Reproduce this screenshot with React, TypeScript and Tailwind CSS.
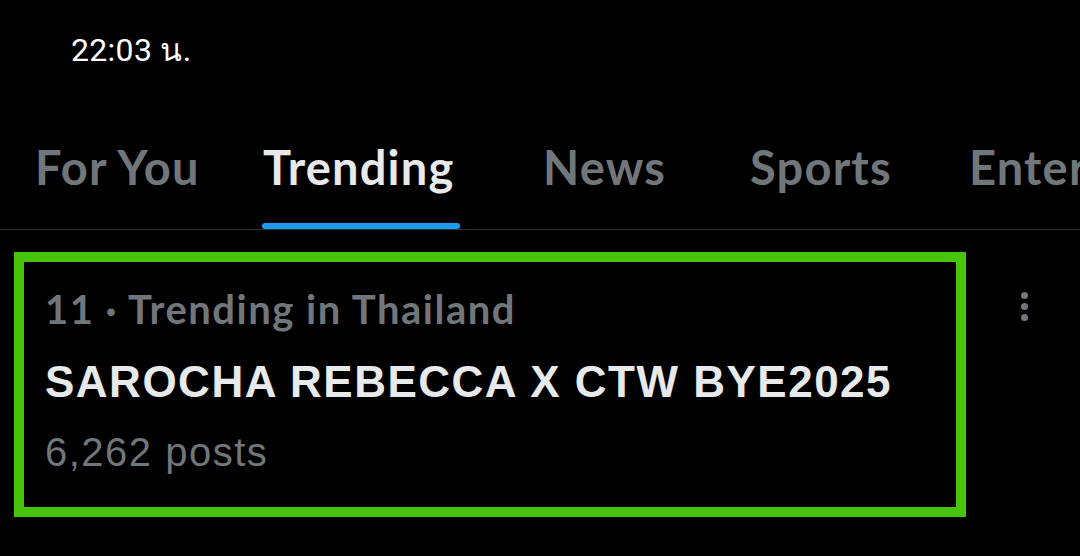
const tabs = [
  { label: "For You", active: false, w: "w-[228px]" },
  { label: "Trending", active: true, w: "w-[280px]" },
  { label: "News", active: false, w: "w-[207px]" },
  { label: "Sports", active: false, w: "w-[219px]" },
  { label: "Entertainment", active: false, w: "w-[300px]" },
];

const App = () => {
  return (
    <div className="w-[1080px] h-[556px] bg-black overflow-hidden">
      {/* Status bar */}
      <div className="pt-[34px] pl-[71px] h-[144px]">
        <span className="text-[32px] leading-[32px] font-normal tracking-[0.3px] text-white font-['Roboto',sans-serif]">
          22:03 น.
        </span>
      </div>

      {/* Tabs */}
      <div className="flex pl-[35px] whitespace-nowrap border-b border-[#2f3336] font-['Lato',sans-serif]">
        {tabs.map((tab) => (
          <div key={tab.label} className={`${tab.w} flex flex-col shrink-0`}>
            <span
              className={`text-[47px] leading-none font-bold tracking-[1.2px] ${
                tab.active ? "text-[#e7e9ea]" : "text-[#71767b]"
              }`}
            >
              {tab.label}
            </span>
            <div
              className={`mt-[32px] h-[6px] w-[198px] -ml-[1px] rounded-full ${
                tab.active ? "bg-[#1d9bf0]" : "bg-transparent"
              }`}
            />
          </div>
        ))}
      </div>

      {/* Trend row */}
      <div className="flex mt-[22px]">
        <div className="ml-[14px] w-[952px] h-[265px] border-[10px] border-[#47c30a] pt-[27px] pl-[21px]">
          <div className="text-[40px] leading-none font-bold tracking-[1.5px] text-[#71767b] font-['Lato',sans-serif]">
            11 · Trending in Thailand
          </div>
          <div className="mt-[31px] text-[44px] leading-none font-bold tracking-[1.5px] text-[#e7e9ea] font-['Liberation_Sans',Arial,sans-serif] whitespace-nowrap">
            SAROCHA REBECCA X CTW BYE2025
          </div>
          <div className="mt-[28px] text-[40px] leading-none tracking-[1.5px] text-[#71767b] font-['Liberation_Sans',Arial,sans-serif]">
            6,262 posts
          </div>
        </div>
        <div className="ml-[55px] mt-[40px] flex flex-col gap-[4px]">
          <span className="w-[7px] h-[7px] rounded-full bg-[#71767b]" />
          <span className="w-[7px] h-[7px] rounded-full bg-[#71767b]" />
          <span className="w-[7px] h-[7px] rounded-full bg-[#71767b]" />
        </div>
      </div>
    </div>
  );
};

export default App;
